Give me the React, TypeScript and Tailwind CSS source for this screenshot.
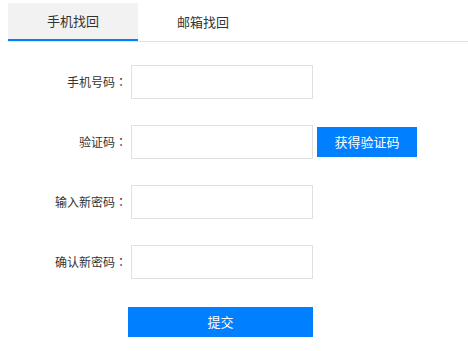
export default function App() {
  const rows = ["手机号码", "验证码", "输入新密码", "确认新密码"];
  return (
    <div
      className="w-[468px] h-[351px] bg-white text-[#333] pt-[3px]"
      style={{ fontFamily: '"Microsoft YaHei", "Noto Sans CJK SC", sans-serif' }}
    >
      {/* Tabs */}
      <div className="ml-2 flex border-b border-[#e2e2e2]">
        <div className="w-[130px] h-[38px] bg-[#f2f2f2] border-b-2 border-[#0080ff] flex items-center justify-center text-[13px]">
          手机找回
        </div>
        <div className="w-[130px] h-[38px] flex items-center justify-center text-[13px]">
          邮箱找回
        </div>
      </div>

      {/* Form */}
      <div className="mt-[23px] flex flex-col gap-[26px]">
        {rows.map((label, i) => (
          <div key={label} className="flex items-center h-[34px]">
            <div className="w-[127px] text-right text-[12px]">
              {label}
              <span className="font-['Noto_Sans_CJK_JP',sans-serif]">：</span>
            </div>
            <input className="ml-1 w-[182px] h-[34px] border border-[#e0e0e0] outline-none" />
            {i === 1 && (
              <button className="ml-1 w-[100px] h-[30px] bg-[#0080ff] text-white text-[13px]">
                获得验证码
              </button>
            )}
          </div>
        ))}
      </div>

      <button className="mt-[28px] ml-[128px] w-[185px] h-[30px] bg-[#0080ff] text-white text-[13px]">
        提交
      </button>
    </div>
  );
}
